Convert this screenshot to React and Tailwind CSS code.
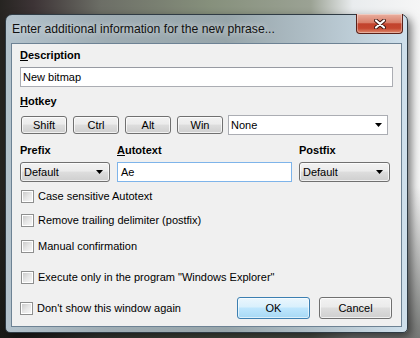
import React from 'react'

const font = "font-['Liberation_Sans',Arial,sans-serif]"

function Arrow() {
  return (
    <svg width="7" height="4" viewBox="0 0 7 4" className="shrink-0">
      <polygon points="0,0 7,0 3.5,4" fill="#000" />
    </svg>
  )
}

function WinButton({ children, className = '', focused = false }) {
  return (
    <div
      className={`flex items-center justify-center rounded-[3px] border text-[11px] text-black ${
        focused
          ? 'border-[#3c7fb1] bg-[linear-gradient(180deg,#eaf6fd_0%,#d9f0fc_45%,#bee6fd_50%,#a7d9f5_100%)] shadow-[inset_0_0_0_1px_rgba(255,255,255,0.6)]'
          : 'border-[#707070] bg-[linear-gradient(180deg,#f2f2f2_0%,#ebebeb_45%,#dddddd_50%,#cfcfcf_100%)] shadow-[inset_0_0_0_1px_rgba(255,255,255,0.7)]'
      } ${className}`}
    >
      {children}
    </div>
  )
}

function Checkbox({ label }) {
  return (
    <div className="flex h-[16px] items-center gap-[4px] pl-[1px]">
      <div className="h-[13px] w-[13px] shrink-0 border border-[#8e8f8f] bg-white p-px">
        <div className="h-full w-full bg-[linear-gradient(135deg,#cbcbcb_0%,#e6e6e6_50%,#f6f6f6_100%)]" />
      </div>
      <span className="text-[11px] leading-[14px] text-black">{label}</span>
    </div>
  )
}

function Label({ children, className = '' }) {
  return <div className={`h-[14px] text-[11px] font-bold leading-[14px] text-black ${className}`}>{children}</div>
}

export default function App() {
  return (
    <div
      className={`${font} h-[338px] w-[420px] overflow-hidden bg-[linear-gradient(180deg,rgba(0,0,0,0)_0%,rgba(0,0,0,0)_55%,rgba(15,18,14,0.55)_100%),linear-gradient(90deg,#262421_0%,#3d3436_8%,#6c6e66_24%,#86907c_50%,#9ba294_74%,#e9ecee_84%,#f6f6f6_100%)] pl-[5px] pt-[14px]`}
    >
      <div className="flex h-[319px] w-[403px] flex-col rounded-t-[7px] rounded-b-[5px] border border-[#2f3b44] bg-[linear-gradient(90deg,#b3c2cc_0%,#9fadb4_25%,#97a5aa_55%,#aebdc5_75%,#cfe0ec_100%)] shadow-[3px_4px_10px_rgba(0,0,0,0.55)]">
        <div className="flex h-[28px] shrink-0 items-start">
          <div className="pl-[6px] pt-[6px] text-[12.2px] leading-[16px] text-[#111] [text-shadow:0_0_6px_rgba(255,255,255,0.8)]">
            Enter additional information for the new phrase...
          </div>
          <div className="ml-auto mr-[4px] -mt-px flex h-[20px] w-[47px] items-center justify-center rounded-b-[4px] border border-t-0 border-[#5a2119] bg-[linear-gradient(180deg,#eab0a0_0%,#d9806b_45%,#c2432d_52%,#c5472f_75%,#de8b70_100%)] shadow-[inset_0_0_0_1px_rgba(255,255,255,0.35)]">
            <svg width="12" height="10" viewBox="0 0 12 10">
              <path d="M2 1.5 L10 8.5 M10 1.5 L2 8.5" stroke="#3b1510" strokeWidth="4" strokeLinecap="round" />
              <path d="M2 1.5 L10 8.5 M10 1.5 L2 8.5" stroke="#ffffff" strokeWidth="2.2" strokeLinecap="round" />
            </svg>
          </div>
        </div>

        <div className="mx-[5px] flex-1 border border-[#6d8294] bg-[#f0f0f0] pl-[8px]">
          <Label className="mt-[4px]">
            <span className="underline">D</span>escription
          </Label>
          <div className="mt-[5px] flex h-[20px] w-[373px] items-center border border-[#abadb3] border-t-[#979aa2] bg-white pl-[2px] text-[11px] text-black">
            New bitmap
          </div>

          <Label className="mt-[7px]">
            <span className="underline">H</span>otkey
          </Label>
          <div className="mt-[7px] flex h-[20px] items-center">
            <div className="ml-[1px] flex gap-[6px]">
              <WinButton className="h-[18px] w-[46px]">Shift</WinButton>
              <WinButton className="h-[18px] w-[46px]">Ctrl</WinButton>
              <WinButton className="h-[18px] w-[46px]">Alt</WinButton>
              <WinButton className="h-[18px] w-[46px]">Win</WinButton>
            </div>
            <div className="ml-[5px] flex h-[20px] w-[160px] items-center justify-between border border-[#abadb3] bg-white pl-[2px] pr-[5px] text-[11px] text-black">
              None
              <Arrow />
            </div>
          </div>

          <div className="mt-[8px] flex">
            <Label className="w-[97px]">Prefix</Label>
            <Label className="w-[182px]">
              <span className="underline">A</span>utotext
            </Label>
            <Label>Postfix</Label>
          </div>
          <div className="mt-[5px] flex h-[20px] gap-[7px]">
            <WinButton className="h-[20px] w-[90px] !justify-between pl-[3px] pr-[6px]">
              Default
              <Arrow />
            </WinButton>
            <div className="flex h-[20px] w-[175px] items-center border border-[#7eb4ea] bg-white pl-[3px] text-[11px] text-black">
              Ae
            </div>
            <WinButton className="h-[20px] w-[91px] !justify-between pl-[3px] pr-[6px]">
              Default
              <Arrow />
            </WinButton>
          </div>

          <div className="mt-[6px]">
            <Checkbox label="Case sensitive Autotext" />
          </div>
          <div className="mt-[8px]">
            <Checkbox label="Remove trailing delimiter (postfix)" />
          </div>
          <div className="mt-[10px]">
            <Checkbox label="Manual confirmation" />
          </div>
          <div className="mt-[15px]">
            <Checkbox label={'Execute only in the program "Windows Explorer"'} />
          </div>

          <div className="mt-[12px] flex h-[22px] items-center">
            <div className="-ml-px">
              <Checkbox label="Don't show this window again" />
            </div>
            <div className="ml-auto mr-[9px] flex gap-[9px]">
              <WinButton focused className="h-[22px] w-[73px]">OK</WinButton>
              <WinButton className="h-[22px] w-[73px]">Cancel</WinButton>
            </div>
          </div>
        </div>
        <div className="h-[5px] shrink-0" />
      </div>
    </div>
  )
}
